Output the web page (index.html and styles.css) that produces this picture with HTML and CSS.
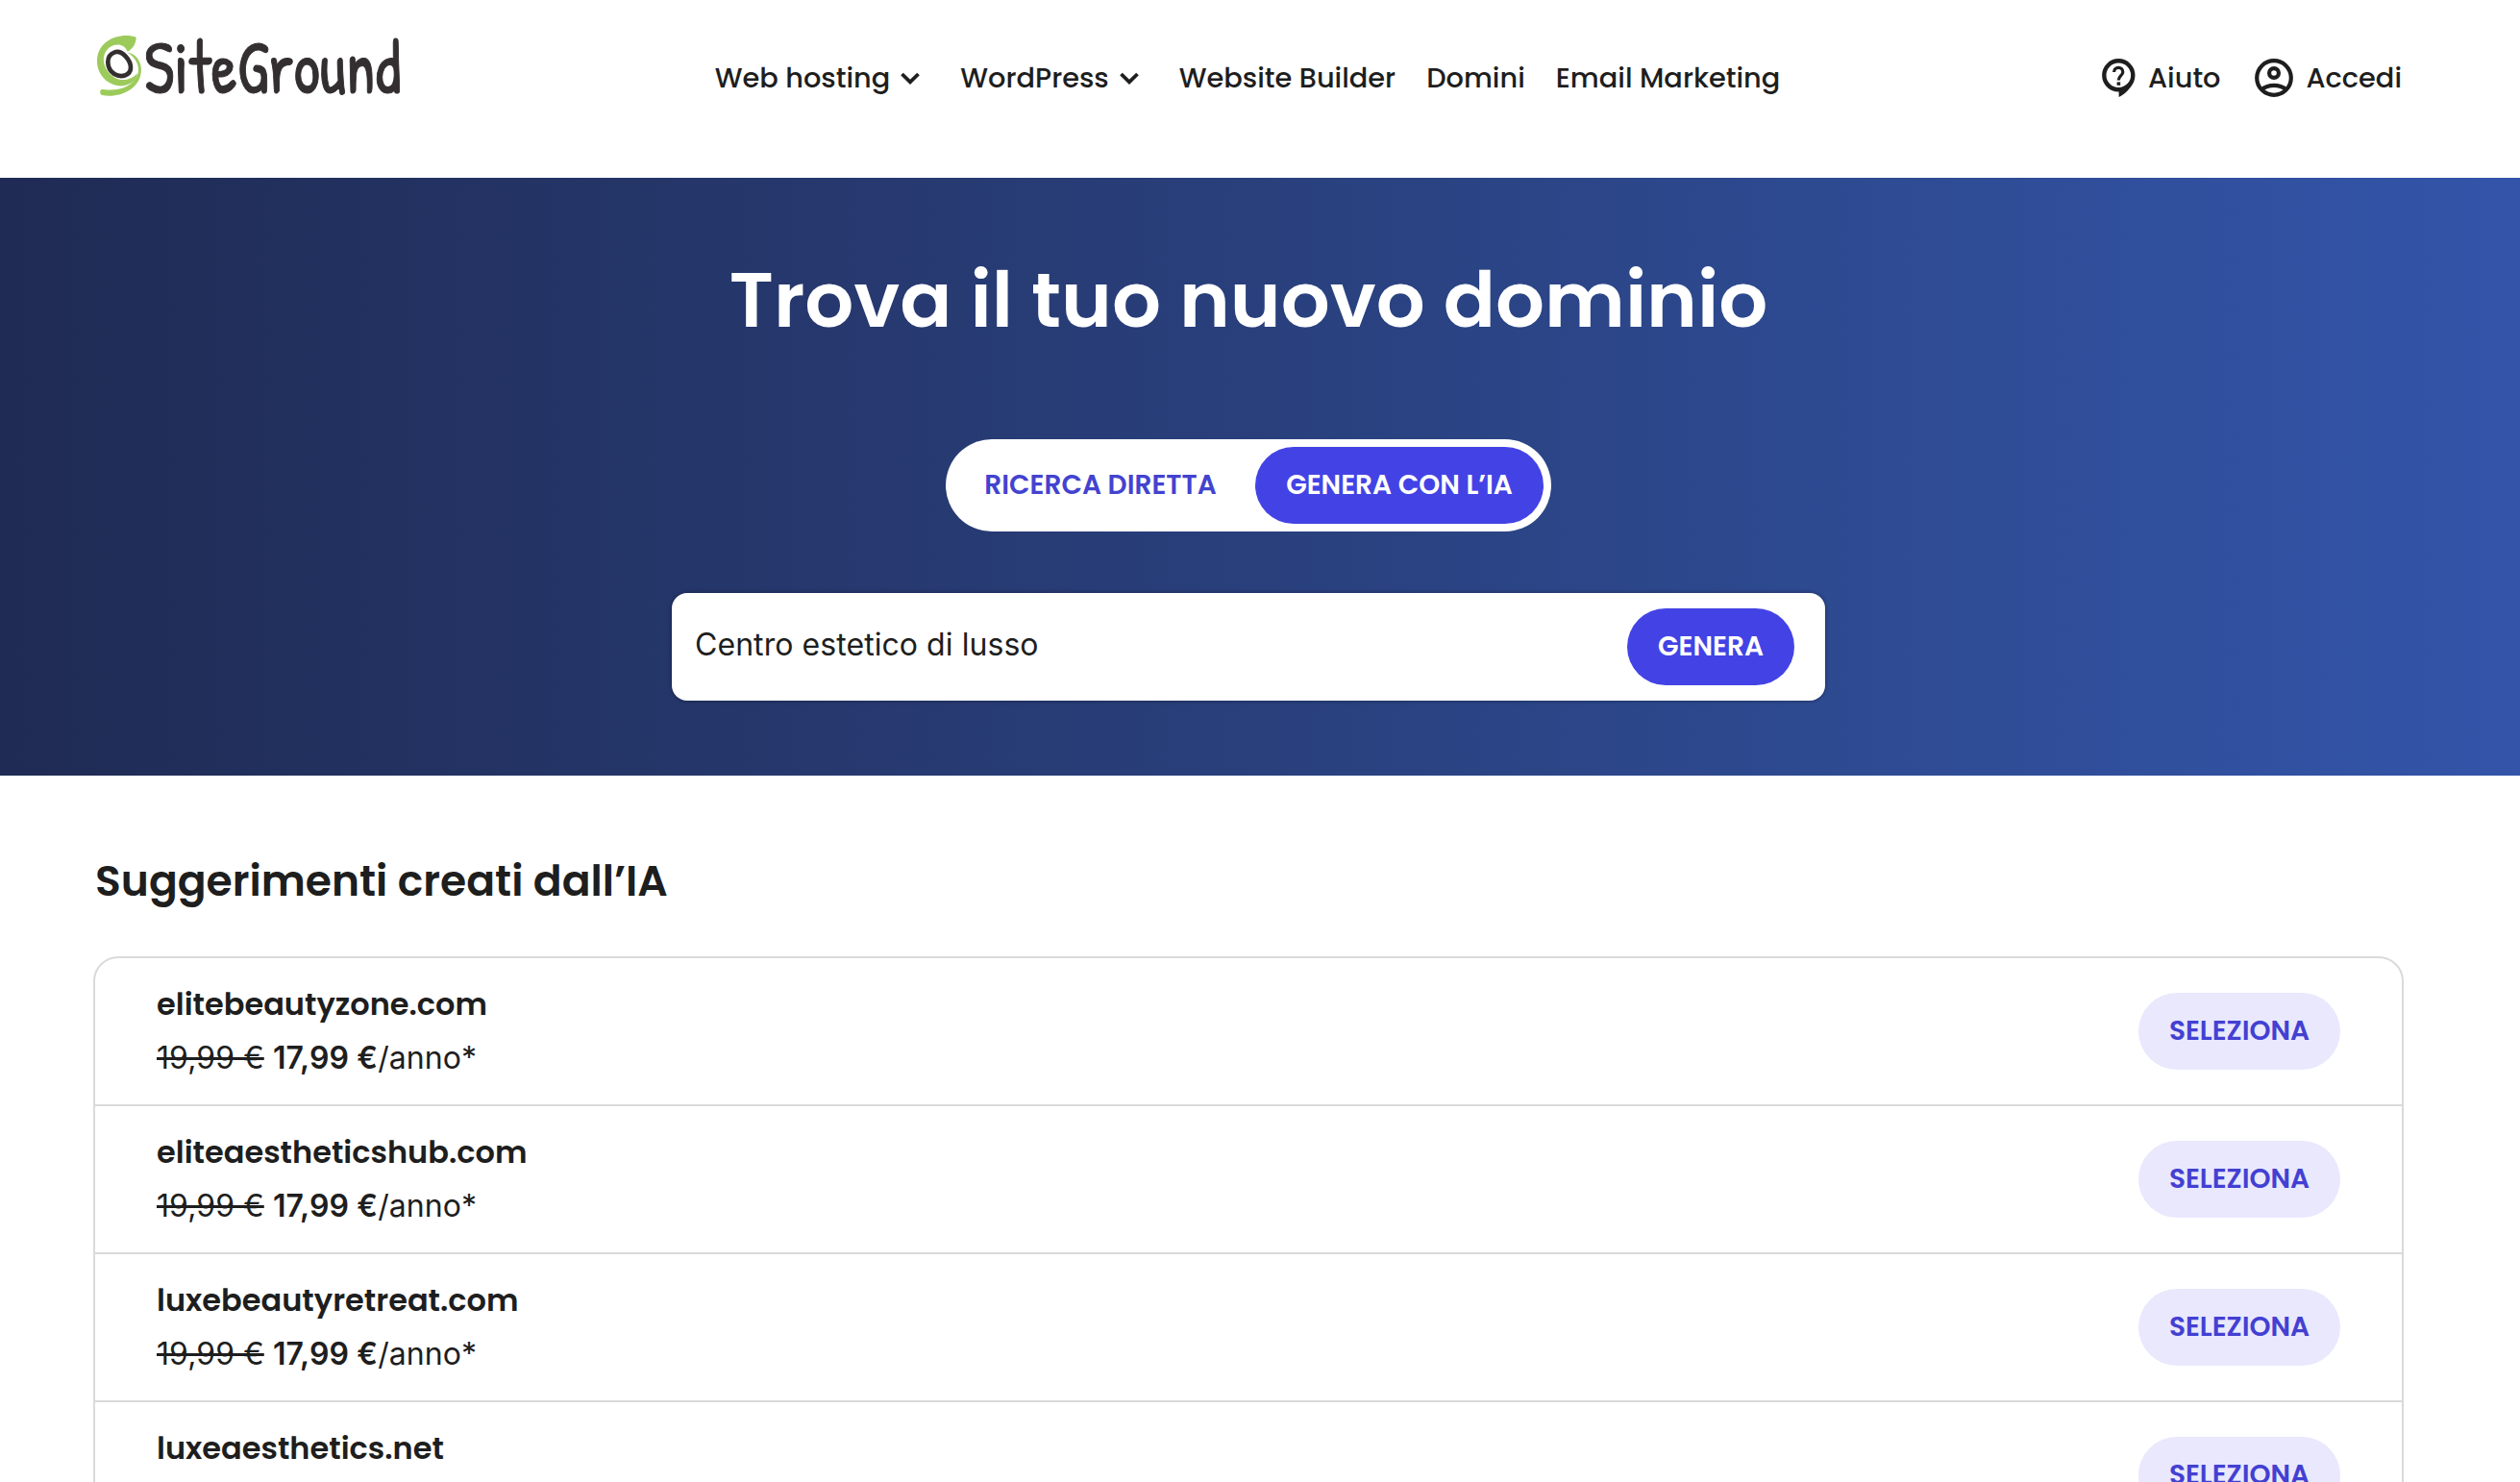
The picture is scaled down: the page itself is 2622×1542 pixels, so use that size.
FILE: index.html
```html
<!DOCTYPE html>
<html lang="it">
<head>
    <meta charset="UTF-8">
    <meta name="viewport" content="width=device-width, initial-scale=1.0">
    <title>Trova il tuo nuovo dominio - SiteGround</title>
    <link rel="stylesheet" href="styles.css">
</head>
<body>
    <div class="page">
        <header class="header">
            <a class="logo" href="#">
                <svg width="320" height="70" viewBox="0 0 320 70">
                    <!-- swirl, drawn at 3x -->
                    <g transform="translate(-8 -7) scale(.33333)">
                        <path fill="#9ccb5b" d="M158 29C112 14 36 34 36 106C37 150 74 184 116 181C140 178 160 165 162 142C148 160 112 173 84 150C48 122 50 78 76 60C98 46 122 52 131 74C150 64 158 46 158 29Z"/>
                        <path fill="#9ccb5b" d="M131 77C164 80 180 118 172 146C163 192 106 220 52 210C42 206 44 190 54 192C104 199 150 184 164 142C170 116 154 90 131 77Z"/>
                        <path fill="none" stroke="#332e2f" stroke-width="14" d="M91 76C114 68 142 102 141 125C140 150 110 156 90 144C64 126 62 86 91 76Z"/>
                    </g>
                    <text class="logo-text" x="53" y="61" textLength="267" lengthAdjust="spacingAndGlyphs">SiteGround</text>
                </svg>
            </a>
            <nav>
                <ul class="nav">
                    <li><a href="#">Web hosting</a><svg class="chevron" viewBox="0 0 20 13"><path d="M1.5 2L10 10.3L18.5 2"/></svg></li>
                    <li><a href="#">WordPress</a><svg class="chevron" viewBox="0 0 20 13"><path d="M1.5 2L10 10.3L18.5 2"/></svg></li>
                    <li><a href="#">Website Builder</a></li>
                    <li><a href="#">Domini</a></li>
                    <li><a href="#">Email Marketing</a></li>
                </ul>
            </nav>
            <div class="account">
                <a href="#">
                    <svg width="35" height="40" viewBox="0 0 35 40">
                        <circle cx="17.3" cy="17.3" r="15" fill="none" stroke="#1e1e1e" stroke-width="4.4"/>
                        <path fill="#1e1e1e" d="M17.6 30V40C24 37 30 31 33 24L27 26L21 30Z"/>
                        <path fill="none" stroke="#1e1e1e" stroke-width="3.2" d="M12.6 14C12.6 7.8 21.8 7.8 21.8 14C21.8 17.6 17.3 18 17.3 22.6"/>
                        <path fill="#1e1e1e" d="M15.6 24.4h3.6v3.4h-3.6z"/>
                    </svg>
                    Aiuto
                </a>
                <a href="#">
                    <svg width="40" height="40" viewBox="0 0 40 40">
                        <g fill="none" stroke="#1e1e1e" stroke-width="4.2">
                            <circle cx="20" cy="20" r="17.8"/>
                            <circle cx="20" cy="15" r="4.9"/>
                            <path d="M6.8 32.5C14.5 26.4 25.5 26.4 33.2 32.5"/>
                        </g>
                    </svg>
                    Accedi
                </a>
            </div>
        </header>

        <section class="hero">
            <h1>Trova il tuo nuovo dominio</h1>
            <div class="switch">
                <button class="switch-option">RICERCA DIRETTA</button>
                <button class="switch-option active">GENERA CON L’IA</button>
            </div>
            <form class="search">
                <span class="search-text">Centro estetico di lusso</span>
                <button class="btn" type="button">GENERA</button>
            </form>
        </section>

        <main class="results">
            <h2>Suggerimenti creati dall’IA</h2>
            <ul class="domain-list">
                <li class="domain">
                    <div class="domain-info">
                        <h3>elitebeautyzone.com</h3>
                        <p><del>19,99 €</del> <strong>17,99 €</strong>/anno*</p>
                    </div>
                    <button class="btn btn-light">SELEZIONA</button>
                </li>
                <li class="domain">
                    <div class="domain-info">
                        <h3>eliteaestheticshub.com</h3>
                        <p><del>19,99 €</del> <strong>17,99 €</strong>/anno*</p>
                    </div>
                    <button class="btn btn-light">SELEZIONA</button>
                </li>
                <li class="domain">
                    <div class="domain-info">
                        <h3>luxebeautyretreat.com</h3>
                        <p><del>19,99 €</del> <strong>17,99 €</strong>/anno*</p>
                    </div>
                    <button class="btn btn-light">SELEZIONA</button>
                </li>
                <li class="domain">
                    <div class="domain-info">
                        <h3>luxeaesthetics.net</h3>
                    </div>
                    <button class="btn btn-light">SELEZIONA</button>
                </li>
            </ul>
        </main>
    </div>
</body>
</html>
```
FILE: styles.css
```css
* {
    box-sizing: border-box;
    margin: 0;
    padding: 0;
}

body {
    background-color: #ffffff;
    color: #1e1e1e;
    font-family: Poppins, Inter, sans-serif;
}

a {
    color: inherit;
    text-decoration: none;
}

ul {
    list-style: none;
}

button {
    border: none;
    font-family: inherit;
    font-size: 28px;
    font-weight: 600;
    cursor: pointer;
}

.page {
    height: 100vh;
    overflow: hidden;
}

/* Header */
.header {
    display: grid;
    grid-template-columns: 1fr auto 1fr;
    align-items: center;
    height: 185px;
    padding: 0 123px 23px 97px;
    font-size: 28.8px;
    font-weight: 500;
}

.logo {
    height: 70px;
    margin-bottom: 20px;
}

.logo svg {
    display: block;
    overflow: visible;
}

.logo-text {
    font-family: "Patrick Hand", Lato, sans-serif;
    font-size: 79px;
    font-weight: 400;
    fill: #332e2f;
    stroke: #332e2f;
    stroke-width: 1px;
}

.nav {
    display: flex;
    gap: 32px;
}

.nav li {
    display: flex;
    align-items: center;
}

.chevron {
    width: 20px;
    height: 13px;
    margin: 1px 10px 0 11px;
    fill: none;
    stroke: #1e1e1e;
    stroke-width: 3.8;
}

.account {
    display: flex;
    justify-content: flex-end;
    gap: 36px;
}

.account a {
    display: flex;
    align-items: center;
    gap: 13px;
}

/* Hero */
.hero {
    display: flex;
    flex-direction: column;
    align-items: center;
    height: 622px;
    padding: 79px 24px 0 0;
    background: linear-gradient(90deg, #1f2b54 0%, #26386e 33%, #2a4281 55%, #2e4b93 75%, #3354a9 100%);
}

.hero h1 {
    color: #ffffff;
    font-size: 80px;
    font-weight: 600;
    line-height: 96px;
}

.switch {
    display: flex;
    gap: 8px;
    margin-top: 97px;
    padding: 8px;
    border-radius: 48px;
    background-color: #ffffff;
}

.switch-option {
    width: 306px;
    height: 80px;
    border-radius: 40px;
    background-color: transparent;
    color: #4343d0;
}

.switch-option.active {
    width: 300px;
    background-color: #4343e5;
    color: #ffffff;
}

.search {
    display: flex;
    align-items: center;
    justify-content: space-between;
    width: 1200px;
    height: 112px;
    margin-top: 64px;
    padding: 0 32px 0 24px;
    border-radius: 16px;
    background-color: #ffffff;
    box-shadow: 0 0 4px rgba(0, 0, 0, 0.4);
}

.search-text {
    padding-bottom: 5px;
    font-family: Inter, sans-serif;
    font-size: 32px;
    letter-spacing: 0.06px;
}

.btn {
    width: 174px;
    height: 80px;
    border-radius: 40px;
    background-color: #4343e5;
    color: #ffffff;
}

.btn-light {
    width: 210px;
    background-color: #e9e8fd;
    color: #4340d2;
}

/* Results */
.results {
    padding: 80px 121px 0 97px;
}

.results h2 {
    padding-left: 2px;
    font-size: 44px;
    font-weight: 600;
    line-height: 60px;
}

.domain-list {
    margin-top: 48px;
    border: 2px solid #dadada;
    border-radius: 26px 26px 0 0;
}

.domain {
    display: flex;
    align-items: center;
    justify-content: space-between;
    height: 154px;
    padding: 0 64px;
    border-bottom: 2px solid #dadada;
}

.domain-info {
    height: 112px;
    line-height: 56px;
}

.domain-info h3 {
    font-size: 32px;
    font-weight: 600;
}

.domain-info p {
    font-family: Inter, sans-serif;
    font-size: 32px;
    letter-spacing: 0.1px;
}

.domain-info strong {
    font-weight: 600;
}
```
